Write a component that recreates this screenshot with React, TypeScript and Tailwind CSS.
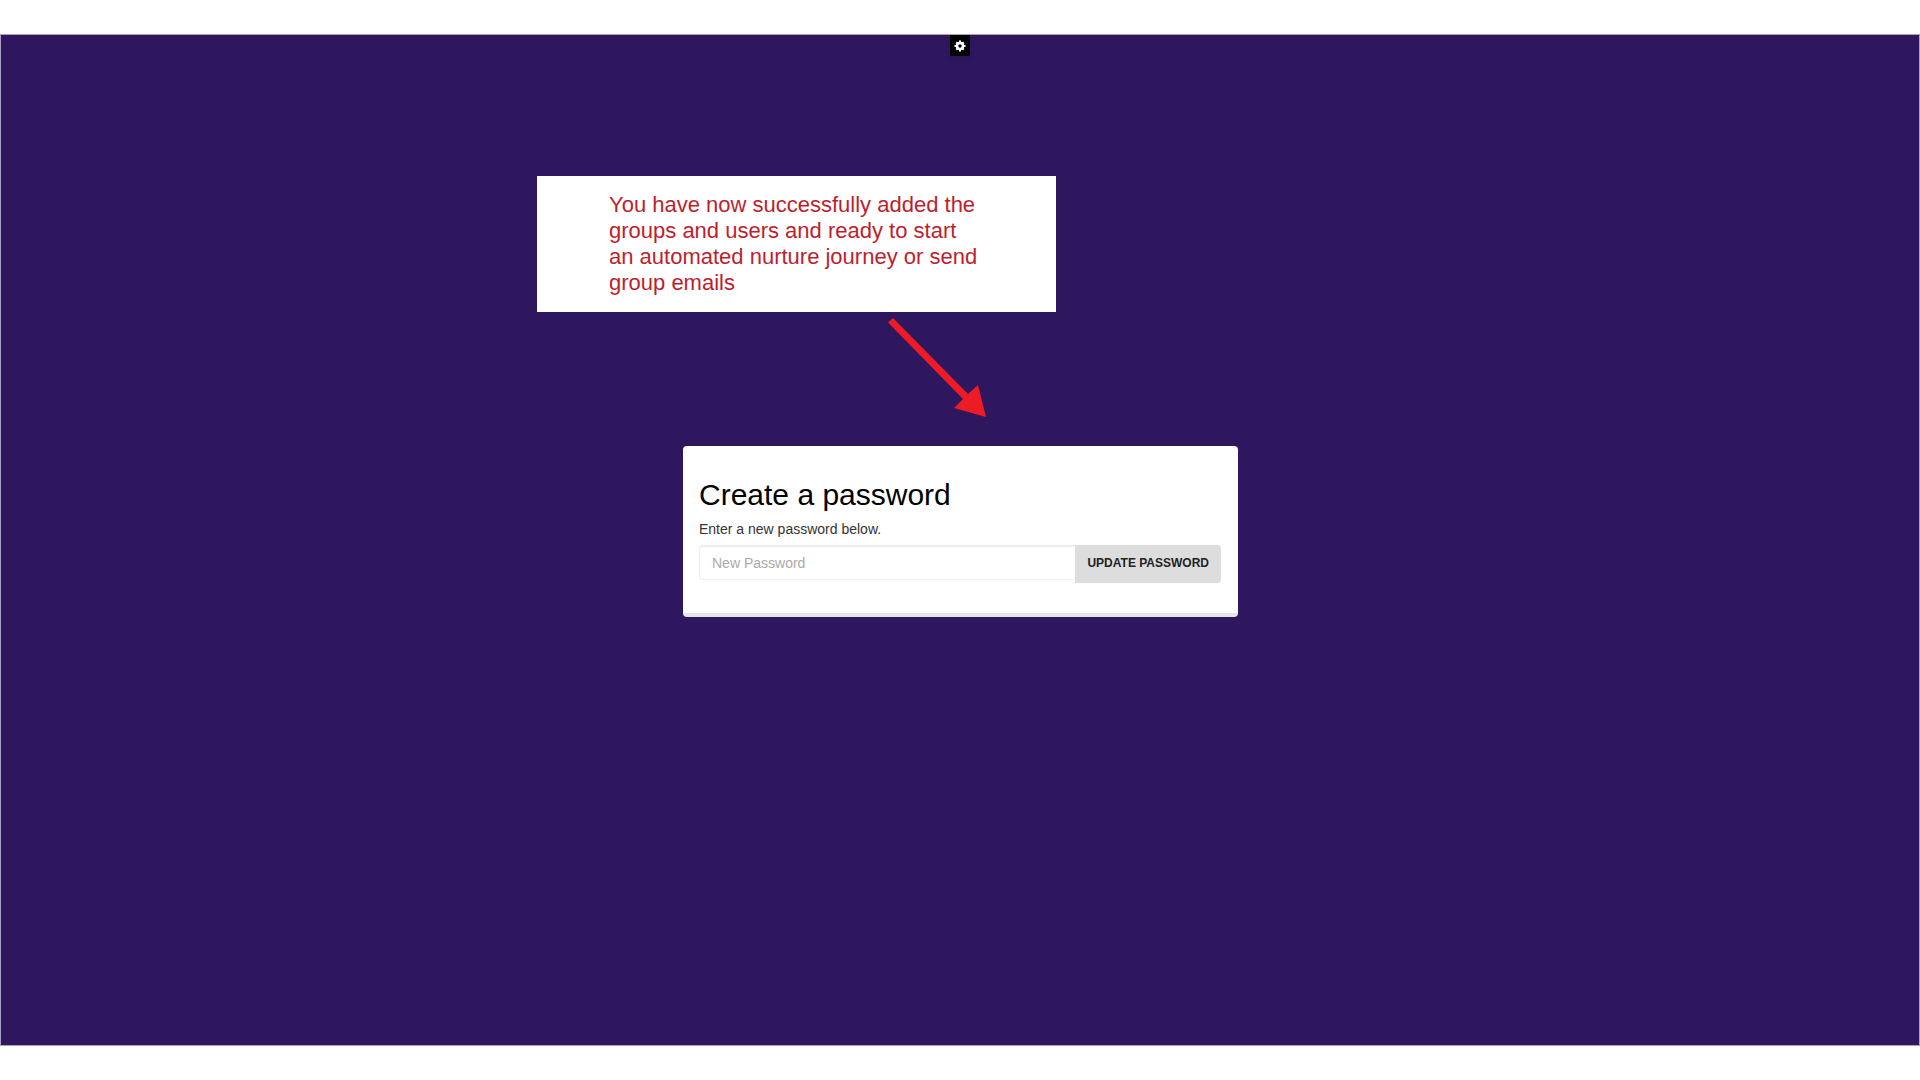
import { useState } from "react";

function SettingsTab() {
  return (
    <button
      type="button"
      aria-label="Settings"
      className="mx-auto flex h-[21px] w-5 items-center justify-center rounded-b-xs bg-black text-white shadow-md"
    >
      <svg viewBox="0 0 24 24" className="h-3 w-3" fill="none" stroke="currentColor">
        <circle cx="12" cy="12" r="6" strokeWidth="5" />
        <path
          d="M12 1v4M12 19v4M1 12h4M19 12h4M4.500 4.500l3 3M16.500 16.500l3 3M4.500 19.500l3-3M16.500 7.500l3-3"
          strokeWidth="4"
        />
      </svg>
    </button>
  );
}

function Callout() {
  return (
    <div className="w-full max-w-[519px] bg-white px-[72px] py-4 text-[22px] leading-[26px] text-[#be1e2d]">
      <p>
        You have now successfully added the
        <br />
        groups and users and ready to start
        <br />
        an automated nurture journey or send
        <br />
        group emails
      </p>
    </div>
  );
}

function Arrow() {
  return (
    <svg
      width="98"
      height="100"
      viewBox="0 0 98 100"
      aria-hidden="true"
      className="mt-1.5 ml-[351px] fill-[#ed1c24]"
    >
      <path d="M0 4.500L5 0L80 76L90 67L98 99L66 90L75 81Z" />
    </svg>
  );
}

function PasswordCard() {
  const [password, setPassword] = useState("");

  return (
    <form
      onSubmit={(e) => e.preventDefault()}
      className="mt-7 ml-[146px] max-w-[555px] rounded-sm border-b-4 border-[#e6e6e6] bg-white pt-[31px] pr-[17px] pb-[30px] pl-4"
    >
      <h1 className="text-[30px] leading-9 text-black">Create a password</h1>
      <label htmlFor="new-password" className="mt-1.5 block text-sm text-[#333]">
        Enter a new password below.
      </label>
      <div className="mt-1.5 flex items-start">
        <input
          id="new-password"
          type="password"
          value={password}
          onChange={(e) => setPassword(e.target.value)}
          placeholder="New Password"
          className="h-[35px] min-w-0 flex-1 rounded-l-sm border border-r-0 border-t-2 border-[#eee] bg-white px-3 text-sm outline-none placeholder:text-[#aaa]"
        />
        <button
          type="submit"
          className="h-[38px] rounded-r-sm bg-[#ddd] px-3 pb-0.5 text-xs font-bold text-[#222] uppercase"
        >
          Update Password
        </button>
      </div>
    </form>
  );
}

export default function App() {
  return (
    <div className="flex min-h-screen flex-col bg-white py-[34px] font-['Liberation_Sans',Arial,sans-serif]">
      <main className="flex-1 border border-[#a99fc2] bg-[#2e175f]">
        <SettingsTab />
        <div className="mx-auto mt-[120px] w-full max-w-[846px]">
          <Callout />
          <Arrow />
          <PasswordCard />
        </div>
      </main>
    </div>
  );
}
